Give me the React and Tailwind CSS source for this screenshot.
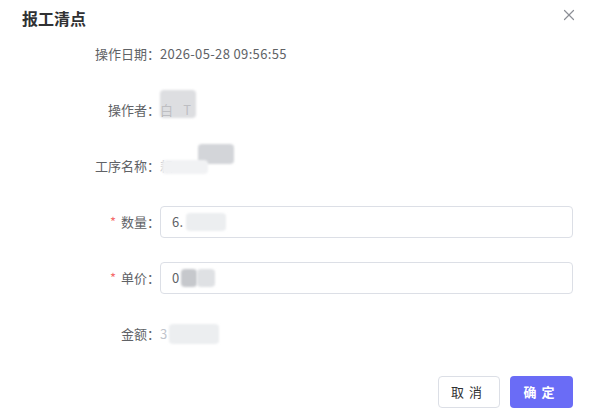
import { X } from 'lucide-react'

const font = { fontFamily: '"Noto Sans CJK SC", "Noto Sans", sans-serif' }

function Blob({ className }) {
  return <span className={'inline-block rounded-sm blur-[1px] ' + className} />
}

function Row({ label, required, children }) {
  return (
    <div className="mb-6 flex h-8 items-center">
      <div className="w-[160px] shrink-0 text-right text-[13px] text-[#606266]">
        {required && <span className="mr-[5px] text-[#f56c6c]">*</span>}
        {label}：
      </div>
      <div className="flex min-w-0 flex-1 items-center text-[13px] tracking-[0.35px] text-[#606266]">{children}</div>
    </div>
  )
}

export default function App() {
  return (
    <div className="h-[414px] w-[596px] overflow-hidden bg-white" style={font}>
      <div className="flex items-start justify-between pl-[22px] pr-[18px] pt-[6px]">
        <h2 className="text-[16px] font-bold leading-6 text-[#303133]">报工清点</h2>
        <X className="mt-[0px] h-[18px] w-[18px] text-[#8c8f96]" strokeWidth={1.6} />
      </div>

      <div className="pr-[23px] pt-[8px]">
        <Row label="操作日期">2026-05-28 09:56:55</Row>
        <Row label="操作者">
          <span className="relative">
            白
            <Blob className="absolute left-0 top-[-10px] h-[28px] w-[36px] bg-[#d4d6da]/80" />
          </span>
          <span className="ml-[10px]">T</span>
        </Row>
        <Row label="工序名称">
          <span className="relative inline-flex h-5 w-[78px] items-center">
            <span className="text-[#c0c4cc]">耜</span>
            <Blob className="absolute left-[38px] top-[-12px] h-[20px] w-[36px] bg-[#d3d5d9]" />
            <Blob className="absolute left-[2px] top-[4px] h-[14px] w-[46px] bg-[#f1f2f4]" />
          </span>
        </Row>
        <Row label="数量" required>
          <div className="flex h-8 w-full items-center rounded border border-[#dcdfe6] px-[11px]">
            6.
            <Blob className="ml-[2px] h-[18px] w-[40px] bg-[#eceef0]" />
          </div>
        </Row>
        <Row label="单价" required>
          <div className="flex h-8 w-full items-center rounded border border-[#dcdfe6] px-[11px]">
            0
            <Blob className="ml-[1px] h-[18px] w-[16px] rounded-full bg-[#c6c8cc]" />
            <Blob className="h-[18px] w-[18px] bg-[#dfe1e4]" />
          </div>
        </Row>
        <Row label="金额">
          <span className="text-[#c0c4cc]">3</span>
          <Blob className="ml-[1px] h-[20px] w-[50px] bg-[#eceef0]" />
        </Row>
      </div>

      <div className="flex justify-end gap-[10px] pr-[23px] pt-[2px]">
        <button type="button" className="h-8 w-[62px] rounded border border-[#dcdfe6] bg-white text-[13px] tracking-[5px] text-[#303133]">
          取消
        </button>
        <button type="button" className="h-8 w-[63px] rounded bg-[#6a6cf6] text-[13px] font-bold tracking-[5px] text-white">
          确定
        </button>
      </div>
    </div>
  )
}
